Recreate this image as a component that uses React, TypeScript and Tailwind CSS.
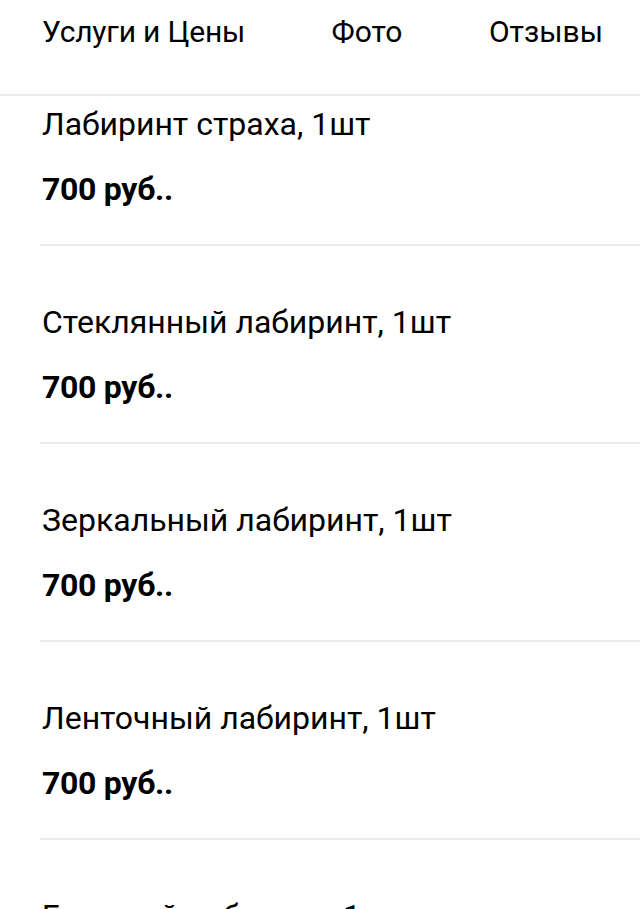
import React from "react";

const items = [
  "Лабиринт страха, 1шт",
  "Стеклянный лабиринт, 1шт",
  "Зеркальный лабиринт, 1шт",
  "Ленточный лабиринт, 1шт",
  "Большой лабиринт, 1шт",
];

export default function App() {
  return (
    <div className="w-[640px] h-[909px] overflow-hidden bg-white text-black font-['Roboto',sans-serif]">
      <div className="h-[96px] border-b-2 border-[#ebebeb] flex justify-between pl-[42px] pr-[37px] pt-[12px] text-[30px] leading-[40px]">
        <span className="tracking-[-0.2px]">Услуги и Цены</span>
        <span>Фото</span>
        <span>Отзывы</span>
      </div>
      <div className="pl-[40px]">
        {items.map((t, i) => (
          <div
            key={t}
            className={`${i === 0 ? "pt-[8px]" : "pt-[56px]"} pb-[35px] border-b-2 border-[#ebebeb]`}
          >
            <div className="pl-[2px] text-[32px] leading-[40px]">{t}</div>
            <div className="pl-[2px] mt-[25px] text-[32px] leading-[40px] font-bold tracking-[-0.3px]">700 руб..</div>
          </div>
        ))}
      </div>
    </div>
  );
}
